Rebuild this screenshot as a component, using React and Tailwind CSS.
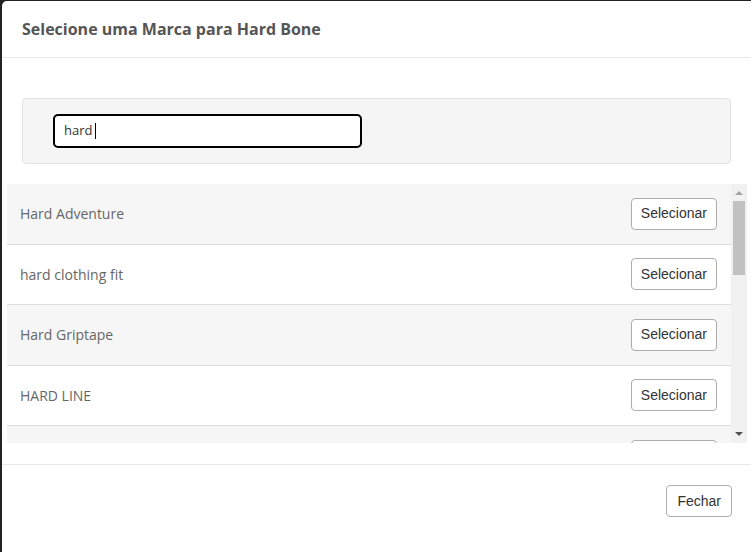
import React from 'react';

const marcas = ['Hard Adventure', 'hard clothing fit', 'Hard Griptape', 'HARD LINE', 'Hard Luck'];

function FakeScrollbar() {
  return (
    <div className="flex w-[16px] shrink-0 flex-col items-center bg-[#f1f1f1]">
      <div className="flex h-[17px] w-full items-center justify-center">
        <svg width="8" height="5" viewBox="0 0 8 5">
          <path d="M0 5 L4 1 L8 5 Z" fill="#a3a3a3" />
        </svg>
      </div>
      <div className="h-[74px] w-[12px] bg-[#c1c1c1]" />
      <div className="flex-1" />
      <div className="flex h-[17px] w-full items-center justify-center">
        <svg width="8" height="5" viewBox="0 0 8 5">
          <path d="M0 0 L8 0 L4 4 Z" fill="#505050" />
        </svg>
      </div>
    </div>
  );
}

export default function App() {
  return (
    <div className="h-[552px] w-[751px] overflow-hidden bg-[#222] pl-[2px] pt-[1px]">
      <div className="flex h-full flex-col rounded-tl-[5px] bg-white font-['Open_Sans',sans-serif]">
        <div className="flex h-[57px] shrink-0 items-center border-b border-[#e9e9e9] px-[20px]">
          <h4 className="text-[16px] font-bold text-[#555]">Selecione uma Marca para Hard Bone</h4>
        </div>

        <div className="mx-[20px] mt-[40px] flex h-[66px] shrink-0 items-center rounded-[4px] border border-[#e3e3e3] bg-[#f5f5f5] pl-[30px]">
          <div className="flex h-[34px] w-[309px] items-center rounded-[5px] border-2 border-black bg-white px-[9px] text-[13px] text-[#333]">
            <span>hard</span>
            <span className="ml-[3px] h-[16px] w-px bg-black" />
          </div>
        </div>

        <div className="ml-[5px] mr-[4px] mt-[20px] flex h-[259px] shrink-0">
          <div className="flex-1 overflow-hidden">
            {marcas.map((m, i) => (
              <div
                key={m}
                className={`flex h-[60.5px] items-center justify-between border-b border-[#dddddd] pl-[13px] pr-[14px] ${i % 2 === 0 ? 'bg-[#f6f6f6]' : 'bg-white'}`}
              >
                <span className="text-[14px] text-[#666]">{m}</span>
                <button
                  type="button"
                  className="h-[32px] rounded-[4px] border border-[#adadad] bg-white px-[9px] font-['Liberation_Sans',Arial,sans-serif] text-[14px] text-[#333]"
                >
                  Selecionar
                </button>
              </div>
            ))}
          </div>
          <FakeScrollbar />
        </div>

        <div className="mt-[21px] flex flex-1 items-start justify-end border-t border-[#e9e9e9] pr-[19px] pt-[20px]">
          <button
            type="button"
            className="h-[32px] rounded-[4px] border border-[#adadad] bg-white px-[10px] font-['Liberation_Sans',Arial,sans-serif] text-[14px] text-[#333]"
          >
            Fechar
          </button>
        </div>
      </div>
    </div>
  );
}
